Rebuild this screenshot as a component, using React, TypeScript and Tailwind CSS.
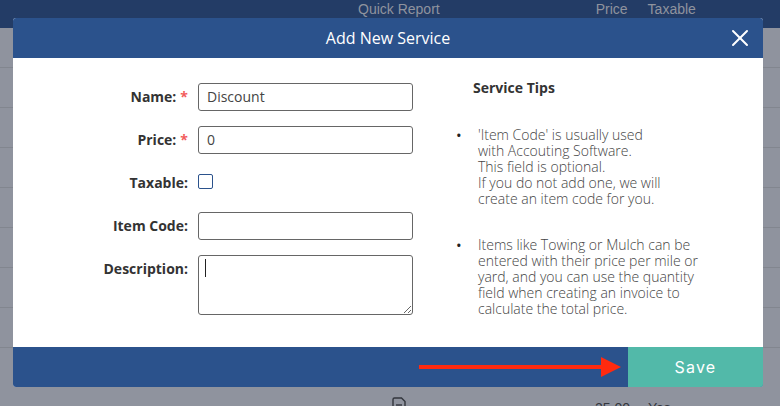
import { X } from 'lucide-react';

const rows = [0, 1, 2, 3, 4, 5, 6, 7];

function Field({ label, required, children }: { label: string; required?: boolean; children: React.ReactNode }) {
  return (
    <div className="flex items-start">
      <label className="w-[185px] shrink-0 pt-[4px] pr-[10px] text-right text-[14px] leading-[20px] font-bold text-[#333]">
        {label}
        {required && <span className="pl-[4px] text-[#f25c5c]">*</span>}
      </label>
      {children}
    </div>
  );
}

export default function App() {
  return (
    <div className="relative h-[406px] w-[780px] overflow-hidden bg-[#8f939e] font-['Open_Sans',sans-serif]">
      {/* page behind the overlay */}
      <div className="flex h-[28px] items-start bg-[#233c66] font-['Liberation_Sans',sans-serif] text-[14px] leading-[18px] text-[#8f939e]">
        <span className="ml-[358px]">Quick Report</span>
        <span className="ml-[156px]">Price</span>
        <span className="ml-[20px]">Taxable</span>
      </div>
      {rows.map((r) => (
        <div key={r} className="h-[40px] border-b border-[#82868f] first:h-[39px]" />
      ))}
      <div className="absolute top-[397px] left-[392px] flex items-start text-[14px] leading-[18px] text-[#33363d]">
        <svg width="14" height="14" viewBox="0 0 14 14" fill="none" stroke="#33363d" strokeWidth="1.4">
          <path d="M1 2.5A1.5 1.5 0 0 1 2.5 1H9.5L13 4.5V11.5A1.5 1.5 0 0 1 11.5 13h-9A1.5 1.5 0 0 1 1 11.5Z" />
          <path d="M4 8h6" />
        </svg>
        <span className="absolute top-[2px] left-[203px] font-['Liberation_Sans',sans-serif]">25.00</span>
        <span className="absolute top-[2px] left-[256px] font-['Liberation_Sans',sans-serif]">Yes</span>
      </div>

      {/* modal */}
      <div className="absolute top-[18px] left-[13px] flex h-[369px] w-[750px] flex-col overflow-hidden rounded-[3px] bg-white">
        <div className="relative flex h-[40px] shrink-0 items-center justify-center bg-[#2b528c] text-[16px] text-white">
          Add New Service
          <X className="absolute top-[6px] right-[9px] h-[28px] w-[28px] text-white" strokeWidth={1.7} />
        </div>
        <div className="flex min-h-0 flex-1">
          <div className="flex w-[400px] shrink-0 flex-col pt-[25px]">
            <Field label="Name:" required>
              <input readOnly value="Discount" className="h-[28px] w-[215px] rounded-[3px] border border-[#666] px-[8px] pb-[2px] text-[14px] text-[#444] outline-none" />
            </Field>
            <div className="mt-[15px]">
              <Field label="Price:" required>
                <input readOnly value="0" className="h-[28px] w-[215px] rounded-[3px] border border-[#666] px-[8px] pb-[2px] text-[14px] text-[#444] outline-none" />
              </Field>
            </div>
            <div className="mt-[15px] h-[43px]">
              <Field label="Taxable:">
                <span className="mt-[5px] block h-[15px] w-[15px] rounded-[2px] border border-[#2b528c] bg-white" />
              </Field>
            </div>
            <Field label="Item Code:">
              <input readOnly className="h-[28px] w-[215px] rounded-[3px] border border-[#666] px-[8px] text-[14px] outline-none" />
            </Field>
            <div className="mt-[15px]">
              <Field label="Description:">
                <div className="relative">
                  <textarea readOnly className="block h-[60px] w-[215px] rounded-[3px] border border-[#666] outline-none" />
                  <span className="absolute top-[4px] left-[7px] h-[18px] w-px bg-[#222]" />
                </div>
              </Field>
            </div>
          </div>
          <div className="flex-1 pt-[21px] pl-[60px] text-[14px] leading-[16px] font-light text-[#444]">
            <h2 className="text-[14px] leading-[18px] font-bold text-[#333]">Service Tips</h2>
            <ul className="mt-[30px] flex flex-col gap-[30px]">
              <li className="relative pl-[5px]">
                <span className="absolute top-0 left-[-17px] text-[15px] font-normal text-[#222]">•</span>
                'Item Code' is usually used
                <br />
                with Accouting Software.
                <br />
                This field is optional.
                <br />
                If you do not add one, we will
                <br />
                create an item code for you.
              </li>
              <li className="relative w-[232px] pl-[5px]">
                <span className="absolute top-0 left-[-17px] text-[15px] font-normal text-[#222]">•</span>
                Items like Towing or Mulch can be entered with their price per mile or yard, and you can use the quantity field when creating an invoice to calculate the total price.
              </li>
            </ul>
          </div>
        </div>
        <div className="relative flex h-[40px] shrink-0 justify-end bg-[#2b528c]">
          <button className="flex h-[40px] w-[135px] items-center justify-center bg-[#52b9a9] font-['Inter',sans-serif] text-[16px] tracking-[1.2px] text-white">
            Save
          </button>
          <svg className="absolute top-[8px] left-[406px]" width="204" height="24" viewBox="0 0 204 24">
            <path d="M0 10h182V2l20 10-20 10v-8H0Z" fill="#ff2a0f" />
          </svg>
        </div>
      </div>
    </div>
  );
}
